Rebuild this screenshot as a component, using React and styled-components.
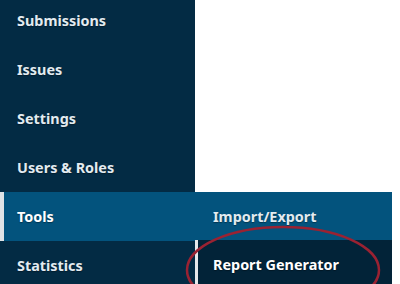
import React from 'react';
import styled, { createGlobalStyle } from 'styled-components';

const items = ['Submissions', 'Issues', 'Settings', 'Users & Roles', 'Tools', 'Statistics'];
const toolItems = ['Import/Export', 'Report Generator'];

export default function App() {
  return (
    <>
      <GlobalStyle />
      <Page>
        <Sidebar>
          {items.map((item) => (
            <NavItem key={item} $active={item === 'Tools'}>
              {item}
              {item === 'Tools' && (
                <SubMenu>
                  {toolItems.map((sub) => (
                    <SubItem key={sub} $current={sub === 'Report Generator'}>{sub}</SubItem>
                  ))}
                </SubMenu>
              )}
            </NavItem>
          ))}
        </Sidebar>
        <Circle width="200" height="100" viewBox="0 0 200 100">
          <ellipse cx="98" cy="46" rx="96" ry="43" fill="none" stroke="#9a2232" strokeWidth="2.5" />
        </Circle>
      </Page>
    </>
  );
}

const GlobalStyle = createGlobalStyle`
  body {
    margin: 0;
    background: #fff;
    font-family: "Noto Sans", "DejaVu Sans", sans-serif;
    overflow: hidden;
  }
`

const Page = styled.div`
  position: relative;
  width: 400px;
  height: 284px;
  overflow: hidden;
`

const Sidebar = styled.ul`
  list-style: none;
  margin: -4px 0 0;
  padding: 0;
  width: 195px;
  background: #032b44;
`

const NavItem = styled.li`
  position: relative;
  display: flex;
  align-items: center;
  height: 49px;
  padding-left: ${p => p.$active ? '13px' : '17px'};
  border-left: ${p => p.$active ? '4px solid #dfe3e6' : 'none'};
  background: ${p => p.$active ? '#03537d' : 'transparent'};
  color: ${p => p.$active ? '#ffffff' : '#e3ebf0'};
  font-size: 14.4px;
  font-weight: 700;
  text-shadow: 0 1px 1px rgba(0, 0, 0, .35);
`

const SubMenu = styled.ul`
  position: absolute;
  top: 0;
  left: 191px;
  width: 197px;
  list-style: none;
  margin: 0;
  padding: 0;
  background: #03537d;
`

const SubItem = styled.li`
  display: flex;
  align-items: center;
  height: ${p => p.$current ? '49px' : '48px'};
  padding-left: ${p => p.$current ? '15px' : '18px'};
  border-left: ${p => p.$current ? '3px solid #e6e8ea' : 'none'};
  background: ${p => p.$current ? '#022338' : 'transparent'};
  color: ${p => p.$current ? '#ffffff' : '#e3ebf0'};
`

const Circle = styled.svg`
  position: absolute;
  left: 185px;
  top: 224px;
  pointer-events: none;
`
